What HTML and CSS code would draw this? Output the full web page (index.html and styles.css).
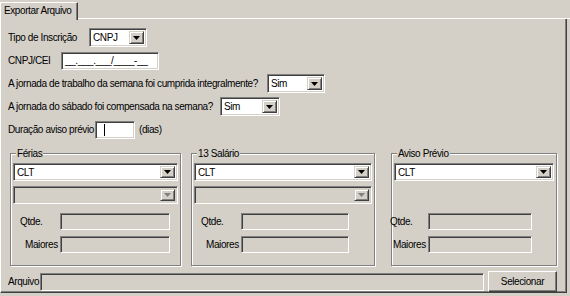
FILE: index.html
```html
<!DOCTYPE html>
<html lang="pt-BR">
<head>
    <meta charset="UTF-8">
    <title>Exportar Arquivo</title>
    <link rel="stylesheet" href="styles.css">
</head>
<body>
    <div class="window">
        <div class="tab-header">
            <div class="tab active">Exportar Arquivo</div>
            <div class="tab-rest"></div>
        </div>
        <div class="panel">
            <div class="form">
                <div class="row">
                    <span class="label lbl-tipo">Tipo de Inscrição</span>
                    <div class="combo combo-tipo">
                        <span class="combo-value">CNPJ</span>
                        <span class="combo-btn"><svg width="7" height="4" viewBox="0 0 7 4"><path d="M0 0h7L3.5 4z"/></svg></span>
                    </div>
                </div>
                <div class="row">
                    <span class="label lbl-cnpj">CNPJ/CEI</span>
                    <div class="edit edit-cnpj">__.___.___/____-__</div>
                </div>
                <div class="row">
                    <span class="label lbl-jornada">A jornada de trabalho da semana foi cumprida integralmente?</span>
                    <div class="combo combo-sim">
                        <span class="combo-value">Sim</span>
                        <span class="combo-btn"><svg width="7" height="4" viewBox="0 0 7 4"><path d="M0 0h7L3.5 4z"/></svg></span>
                    </div>
                </div>
                <div class="row">
                    <span class="label lbl-sabado">A jornada do sábado foi compensada na semana?</span>
                    <div class="combo combo-sim2">
                        <span class="combo-value">Sim</span>
                        <span class="combo-btn"><svg width="7" height="4" viewBox="0 0 7 4"><path d="M0 0h7L3.5 4z"/></svg></span>
                    </div>
                </div>
                <div class="row">
                    <span class="label lbl-aviso">Duração aviso prévio</span>
                    <div class="edit edit-dias"><span class="caret"></span></div>
                    <span class="label dias">(dias)</span>
                </div>
            </div>

            <div class="groups">
                <div class="group group-ferias">
                    <span class="legend">Férias</span>
                    <div class="combo combo-full">
                        <span class="combo-value">CLT</span>
                        <span class="combo-btn"><svg width="7" height="4" viewBox="0 0 7 4"><path d="M0 0h7L3.5 4z"/></svg></span>
                    </div>
                    <div class="combo combo-full disabled">
                        <span class="combo-value"></span>
                        <span class="combo-btn"><svg width="7" height="4" viewBox="0 0 7 4"><path d="M0 0h7L3.5 4z"/></svg></span>
                    </div>
                    <div class="field-row first">
                        <span class="field-label lbl-qtde">Qtde.</span>
                        <div class="edit readonly field-input"></div>
                    </div>
                    <div class="field-row">
                        <span class="field-label lbl-maiores">Maiores</span>
                        <div class="edit readonly field-input"></div>
                    </div>
                </div>

                <div class="group group-13">
                    <span class="legend">13 Salário</span>
                    <div class="combo combo-full">
                        <span class="combo-value">CLT</span>
                        <span class="combo-btn"><svg width="7" height="4" viewBox="0 0 7 4"><path d="M0 0h7L3.5 4z"/></svg></span>
                    </div>
                    <div class="combo combo-full disabled">
                        <span class="combo-value"></span>
                        <span class="combo-btn"><svg width="7" height="4" viewBox="0 0 7 4"><path d="M0 0h7L3.5 4z"/></svg></span>
                    </div>
                    <div class="field-row first">
                        <span class="field-label lbl-qtde">Qtde.</span>
                        <div class="edit readonly field-input"></div>
                    </div>
                    <div class="field-row">
                        <span class="field-label lbl-maiores">Maiores</span>
                        <div class="edit readonly field-input"></div>
                    </div>
                </div>

                <div class="group group-aviso">
                    <span class="legend">Aviso Prévio</span>
                    <div class="combo combo-full">
                        <span class="combo-value">CLT</span>
                        <span class="combo-btn"><svg width="7" height="4" viewBox="0 0 7 4"><path d="M0 0h7L3.5 4z"/></svg></span>
                    </div>
                    <div class="combo-space"></div>
                    <div class="field-row first">
                        <span class="field-label lbl-qtde">Qtde.</span>
                        <div class="edit readonly field-input"></div>
                    </div>
                    <div class="field-row">
                        <span class="field-label lbl-maiores">Maiores</span>
                        <div class="edit readonly field-input"></div>
                    </div>
                </div>
            </div>

            <div class="file-row">
                <span class="label lbl-arquivo">Arquivo</span>
                <div class="edit readonly edit-arquivo"></div>
                <button class="btn">Selecionar</button>
            </div>
        </div>
    </div>
</body>
</html>
```

FILE: styles.css
```css
body {
    margin: 0;
    padding: 0;
    background: #d4d0c8;
    font-family: 'Liberation Sans', Arial, sans-serif;
    font-size: 10px;
    letter-spacing: -0.4px;
    color: #000;
    width: 570px;
    height: 296px;
    overflow: hidden;
}
.window {
    padding-top: 2px;
}
.tab-header {
    display: flex;
    height: 17px;
}
.tab {
    width: 73px;
    padding-left: 3px;
    line-height: 16px;
    border-top: 1px solid #fff;
    border-left: 1px solid #fff;
    border-right: 1px solid #404040;
    box-shadow: inset -1px 0 0 #808080;
    background: #d4d0c8;
    position: relative;
    z-index: 1;
    height: 17px;
    white-space: nowrap;
}
.tab-rest {
    flex: 1;
    border-bottom: 1px solid #fff;
}
.panel {
    width: 565px;
    height: 273px;
    border-left: 1px solid #fff;
    border-right: 1px solid #404040;
    border-bottom: 1px solid #404040;
    box-shadow: inset -1px -1px 0 #808080;
}
.form {
    display: flex;
    flex-direction: column;
    gap: 4px;
    padding: 9px 0 0 7px;
}
.row {
    display: flex;
    align-items: center;
    height: 19px;
}
.label {
    white-space: nowrap;
}
.lbl-tipo { width: 81px; }
.lbl-cnpj { width: 53px; }
.lbl-jornada { width: 259px; }
.lbl-sabado { width: 212px; }
.lbl-aviso { width: 87px; }
.dias { margin-left: 4px; }

/* sunken edit / combo frame */
.edit, .combo {
    box-sizing: border-box;
    border: 1px solid;
    border-color: #808080 #fff #fff #808080;
    box-shadow: inset 1px 1px 0 #404040, inset -1px -1px 0 #d4d0c8;
    background: #fff;
}
.edit {
    height: 18px;
    padding: 2px 3px;
    line-height: 12px;
    white-space: nowrap;
}
.edit.readonly {
    background: #d4d0c8;
}
.edit-cnpj { width: 98px; }
.edit-dias {
    width: 40px;
    padding-left: 8px;
}
.caret {
    display: block;
    width: 1px;
    height: 12px;
    background: #000;
}
.combo {
    display: flex;
    align-items: stretch;
    height: 19px;
    padding: 2px;
}
.combo-value {
    flex: 1;
    padding-left: 1px;
    line-height: 13px;
}
.combo-btn {
    width: 15px;
    box-sizing: border-box;
    border: 1px solid;
    border-color: #d4d0c8 #404040 #404040 #d4d0c8;
    box-shadow: inset 1px 1px 0 #fff, inset -1px -1px 0 #808080;
    background: #d4d0c8;
    display: flex;
    align-items: center;
    justify-content: center;
}
.combo-btn svg {
    fill: #000;
}
.combo.disabled {
    background: #d4d0c8;
}
.combo.disabled .combo-btn svg {
    fill: #808080;
}
.combo-tipo { width: 58px; }
.combo-sim { width: 58px; }
.combo-sim2 { width: 60px; }

/* group boxes */
.groups {
    display: flex;
    gap: 9px;
    padding-left: 9px;
    margin-top: 14px;
}
.group {
    box-sizing: border-box;
    height: 113px;
    display: flex;
    flex-direction: column;
    border: 1px solid #808080;
    box-shadow: inset 1px 1px 0 #fff, 1px 1px 0 #fff;
    padding: 0 2px;
}
.group-ferias { width: 171px; }
.group-13 { width: 184px; margin-left: 1px; }
.group-aviso { width: 166px; margin-left: 7px; }
.legend {
    align-self: flex-start;
    margin: -7px 0 0 3px;
    padding: 0 1px;
    height: 13px;
    line-height: 13px;
    background: #d4d0c8;
}
.combo-full {
    height: 18px;
    margin-top: 3px;
}
.combo-full + .combo-full {
    margin-top: 5px;
}
.combo-space {
    height: 23px;
}
.field-row {
    display: flex;
    align-items: center;
    height: 17px;
    margin-top: 6px;
}
.field-row.first {
    margin-top: 9px;
}
.field-label {
    white-space: nowrap;
    box-sizing: border-box;
}
.field-input {
    height: 17px;
    width: 110px;
}
.group .lbl-qtde { width: 47px; padding-left: 7px; }
.group .lbl-maiores { width: 47px; padding-left: 12px; }
.group-13 .field-input { width: 108px; }
.group-aviso .lbl-qtde { width: 38px; padding-left: 0; margin-left: -4px; }
.group-aviso .lbl-maiores { width: 38px; padding-left: 3px; margin-left: -4px; }
.group-aviso .field-input { width: 104px; }

/* bottom file row */
.file-row {
    display: flex;
    align-items: center;
    margin-top: 5px;
    padding-left: 7px;
    height: 21px;
}
.lbl-arquivo { width: 32px; }
.edit-arquivo {
    width: 444px;
    height: 18px;
}
.btn {
    margin-left: 4px;
    width: 69px;
    height: 21px;
    font-family: inherit;
    font-size: inherit;
    letter-spacing: inherit;
    background: #d4d0c8;
    border: 1px solid;
    border-color: #fff #404040 #404040 #fff;
    box-shadow: inset -1px -1px 0 #808080;
    padding: 0;
    color: #000;
}
```
